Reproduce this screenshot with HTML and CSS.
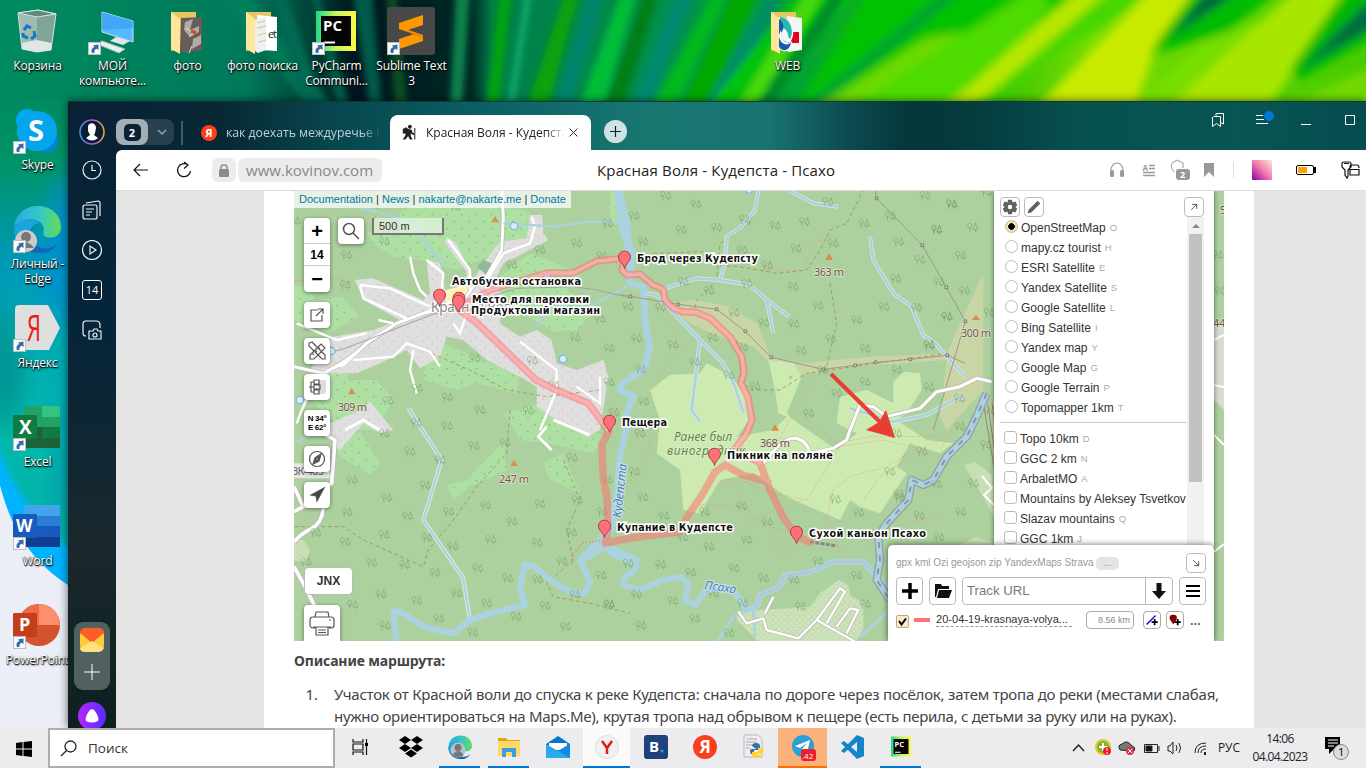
FILE: index.html
```html
<!DOCTYPE html>
<html lang="ru">
<head>
<meta charset="utf-8">
<title>Красная Воля - Кудепста - Псахо</title>
<link rel="stylesheet" href="styles.css">
</head>
<body>
<svg class="sprite" aria-hidden="true">
  <symbol id="shortcut" viewBox="0 0 13 13"><rect width="13" height="13" fill="#b9bcc0"/><rect x="1" y="1" width="11" height="11" fill="#fafafa"/><path d="M4 11C2.500 8 4.500 5.500 6.500 5L5 3.500L10.500 2.500V8L8.800 6.800C7 7.300 6 9 6.500 11Z" fill="#3668ad"/></symbol>
  <symbol id="folder" viewBox="0 0 48 48"><path d="M8 4H33V38L8 43Z" fill="#e9c463"/><path d="M8 4L17 11V46L8 41Z" fill="#ffe69b"/></symbol>
  <symbol id="edge" viewBox="0 0 48 48"><path d="M1 22C3 8 13 1 25 1C38 1 48 10 48 22C48 31 40 34 33 32C28 30 32 27 30 21C26 12 9 12 1 22Z" fill="url(#edgeTop)"/><path d="M1 24C5 15 19 11 27 18C15 20 15 38 28 43C34 45 41 42 45 38C40 46 32 50 22 48C9 46 0 36 1 24Z" fill="#1368ba"/><path d="M1 24C6 12 23 12 27 18C15 20 13 35 22 41C8 43 0 34 1 24Z" fill="#18a5dc"/></symbol>
  <symbol id="pycharm" viewBox="0 0 48 48"><rect x="4" y="3" width="40" height="40" fill="url(#pyc)"/><rect x="9" y="8" width="30" height="30" fill="#050505"/><path d="M12 34.500h11" stroke="#fff" stroke-width="2"/><text x="11" y="23" font-size="15" class="logo-text">PC</text></symbol>
  <symbol id="pin" viewBox="0 0 14 19"><path d="M7 18C6 13 1 11 1 6.600A6 6 0 0 1 13 6.600C13 11 8 13 7 18Z" fill="#ff7077" stroke="#a63d43" stroke-width="1"/></symbol>
  <symbol id="hiker" viewBox="0 0 18 18"><circle cx="10" cy="2.500" r="2.200"/><path d="M2 5L6 3L8 5L12 6L13 9L15 10L14 12L11 10V13L13 17H10L8 13L5 17H2L5 12L5 10H2Z"/><path d="M15.500 4V17" stroke="#222" stroke-width="1.200"/></symbol>
  <defs>
    <linearGradient id="edgeTop"><stop offset="0" stop-color="#2ca8e8"/><stop offset=".55" stop-color="#35c8c5"/><stop offset="1" stop-color="#68dc55"/></linearGradient>
    <linearGradient id="pyc" x2="1"><stop offset="0" stop-color="#21d789"/><stop offset=".5" stop-color="#c8f45c"/><stop offset="1" stop-color="#fcf84a"/></linearGradient>
    <linearGradient id="alice" x1="0" x2="1"><stop offset="0" stop-color="#b126ff"/><stop offset="1" stop-color="#5a2cff"/></linearGradient>
  </defs>
</svg>

<div class="desktop">
<svg class="wallpaper" viewBox="0 0 1366 768">
  <defs>
    <linearGradient id="wallTop"><stop offset="0" stop-color="#008b60"/><stop offset=".18" stop-color="#00795a"/><stop offset=".22" stop-color="#004b3d"/><stop offset=".26" stop-color="#00151f"/><stop offset=".345" stop-color="#002925"/><stop offset=".36" stop-color="#007c4a"/><stop offset=".5" stop-color="#00934c"/><stop offset=".58" stop-color="#00a235"/><stop offset=".7" stop-color="#20bd05"/><stop offset=".8" stop-color="#77dc00"/><stop offset="1" stop-color="#46cb00"/></linearGradient>
    <linearGradient id="wallLeft" x2="0" y2="1"><stop offset="0" stop-color="#008b60"/><stop offset=".1" stop-color="#00946a"/><stop offset=".24" stop-color="#0098b8"/><stop offset=".35" stop-color="#00a9b4"/><stop offset=".5" stop-color="#00b9aa"/><stop offset=".8" stop-color="#05a9a7"/></linearGradient>
    <filter id="soft" x="-20%" y="-20%" width="140%" height="140%"><feGaussianBlur stdDeviation="3"/></filter>
    <filter id="wide" x="-20%" y="-20%" width="140%" height="140%"><feGaussianBlur stdDeviation="5"/></filter>
    <filter id="softer" x="-50%" y="-20%" width="200%" height="140%"><feGaussianBlur stdDeviation="12"/></filter>
  </defs>
  <rect width="1366" height="768" fill="url(#wallTop)"/>
  <rect y="100" width="90" height="668" fill="url(#wallLeft)"/>
  <path d="M-10 290C20 330 30 380 10 420L-10 430Z" fill="#00918f" filter="url(#softer)"/>
  <path d="M80 160C30 220 30 300 80 330Z" fill="#0090d0" filter="url(#softer)"/>
  <path d="M80 350C45 420 50 500 80 560Z" fill="#0088bb" opacity=".5" filter="url(#softer)"/>
  <path d="M-10 425C0 450 15 515 90 562V800H-10Z" fill="#00b3ff" filter="url(#soft)"/>
  <path d="M-5 465C5 510 20 560 80 592V800H-5Z" fill="#eceff8"/>
  <g filter="url(#soft)">
    <path d="M215-10H245L335 110H310Z" fill="#00825b" opacity=".7"/>
    <path d="M270-10H284L325 110H305Z" fill="#006b52"/><path d="M310-10H318L350 110H338Z" fill="#005e49"/>
    <path d="M352-10H372L382 110H370Z" fill="#005c4a"/><path d="M386-10H396L408 110H395Z" fill="#0d4d26"/>
    <path d="M456-10H470L462 110H450Z" fill="#07824c"/>
    <path d="M500-10H512L498 110H486Z" fill="#00a411"/><path d="M525-10H533L514 110H506Z" fill="#09a56b"/>
    <path d="M566-10H580L547 110H526Z" fill="#08a307"/><path d="M590-10H605L570 110H554Z" fill="#00846d"/>
    <path d="M622-10H638L602 110H578Z" fill="#00bd38"/><path d="M645-10H660L622 110H604Z" fill="#007f16"/>
    <path d="M676-10H696L648 110H630Z" fill="#008a6e"/><path d="M715-10H730L675 110H650Z" fill="#00b91e"/>
    <path d="M735-10H760L705 110H680Z" fill="#00a800"/><path d="M771-10H785L724 110H702Z" fill="#008d67"/>
    <path d="M800-10H860L740 110H705Z" fill="#00c311"/><path d="M808-10H826L753 110H735Z" fill="#47d80d"/>
    <path d="M835-10H850L768 110H754Z" fill="#008b25"/>
  </g>
  <g filter="url(#wide)">
    <path d="M870-10H1060L850 125H786Z" fill="#00c200"/>
    <path d="M960-20H978L800 120H786Z" fill="#009e31"/><path d="M925 38L980 30L860 125H790Z" fill="#6bda00"/>
    <path d="M1030-10H1110L955 125H825Z" fill="#4ddb00"/><path d="M1040-10H1085L1030 25L1050 5Z" fill="#00c800"/>
    <path d="M1090-20H1130L970 120H930Z" fill="#b8e600"/><path d="M1110-10H1164L1045 60L980 110H970Z" fill="#47d700"/>
    <path d="M1150-10H1195L1155 50L1130 120H1025Z" fill="#c9ea00"/><path d="M1195-10H1280L1230 30L1150 55L1160 38Z" fill="#00bb00"/>
    <path d="M1205-5L1240-10L1170 38Z" fill="#005b3e"/><path d="M1200 45L1260 20L1220 65L1160 110H1130Z" fill="#77de00"/><path d="M1300-15H1350L1280 90L1260 125H1150Z" fill="#a8e600"/>
    <path d="M1345-10H1386V30L1300 80L1290 70Z" fill="#00b900"/><path d="M1366 3H1386V20L1300 70Z" fill="#006a40"/>
    <path d="M1386 60L1270 115H1386Z" fill="#72d900"/>
  </g>
</svg>

<div class="icon" style="left:0;top:8px"><svg viewBox="0 0 48 48"><path d="M5 5L25 2L43 6L38 42L24 44L9 41Z" fill="#7fa598" stroke="#d6e2df"/><path d="M5 5L24 9L43 6L25 2Z" fill="#5f8d7c" stroke="#dbe6e4"/><path d="M24 9L24 44L9 41L5 6Z" fill="#c8d9d5" opacity=".45"/><path d="M9 35L24 32L39 35L38 42L24 44L9 41Z" fill="#e3e5e3"/><path d="M11 22L14 18L18 20M21 23L22 28L18 31M15 30L10 28L10 25" fill="none" stroke="#1377cb" stroke-width="3"/></svg><span>Корзина</span></div>
<div class="icon" style="left:75px;top:8px"><svg viewBox="0 0 48 48"><path d="M14 4L45 13V34L14 24Z" fill="#56b8ff" stroke="#c5e3f0"/><path d="M14 4L45 13V20L14 22Z" fill="#3ba0f5" opacity=".7"/><path d="M28 29L35 31L42 33L35 37L22 33Z" fill="#e2e7e7"/><path d="M14 33L37 41L31 45L9 36Z" fill="#e9eeee" stroke="#a8b8b8"/><use href="#shortcut" y="34" width="13" height="13"/></svg><span>МОЙ<br>компьюте...</span></div>
<div class="icon" style="left:150px;top:8px"><svg viewBox="0 0 48 48"><use href="#folder"/><path d="M18 10L39 9V42L22 45L17 43Z" fill="#665e57"/><path d="M22 14L30 11L27 22L36 18V24L27 29L21 22ZM30 31L38 27V36L29 41Z" fill="#b2aaa4"/><path d="M23 20L31 25L26 29M29 38L26 45" stroke="#ddd" fill="none"/><path d="M28 23L33 25" stroke="#c94d24" stroke-width="3"/></svg><span>фото</span></div>
<div class="icon" style="left:225px;top:8px"><svg viewBox="0 0 48 48"><use href="#folder"/><path d="M19 7L39 9V43L23 42Z" fill="#fff"/><path d="M17 12L28 9V42L20 45L17 43Z" fill="#edf0ef"/><path d="M19 15L27 13M19 20L28 18M20 27L28 25M20 34L28 32" stroke="#b5d48c"/><text x="30" y="30" font-size="11" textLength="9" fill="#151e29" class="logo-plain">et</text></svg><span>фото поиска</span></div>
<div class="icon" style="left:299px;top:8px"><svg viewBox="0 0 48 48"><use href="#pycharm"/><use href="#shortcut" y="34" width="13" height="13"/></svg><span>PyCharm<br>Communi...</span></div>
<div class="icon" style="left:374px;top:8px"><svg viewBox="0 0 48 48"><rect y="-1" width="48" height="48" rx="3" fill="#484848"/><path d="M12 15L36 7V17L21 22L36 27V33L12 41V31L27 26L12 21Z" fill="#ff9800"/><path d="M21 22L36 27V31L23 25Z" fill="#e88a05"/><use href="#shortcut" y="34" width="13" height="13"/></svg><span>Sublime Text<br>3</span></div>
<div class="icon" style="left:750px;top:8px"><svg viewBox="0 0 48 48"><use href="#folder"/><path d="M24 8L39 10V42L25 44Z" fill="#f2f5f3"/><path d="M28 24H36V35H28Z" fill="#e5001b"/><path d="M16 9C28 8 34 24 28 33C33 38 27 45 20 43L16 41Z" fill="#f6f8f8"/><path d="M17 9C27 9 32 24 27 31C24 29 27 21 17 19Z" fill="#25b9b5"/><path d="M16 11C21 14 22 21 18 25C19 34 24 35 28 34C27 42 21 45 16 39Z" fill="#145fac"/><path d="M18 22C18 32 22 36 28 34C25 39 16 36 16 27Z" fill="#fff"/></svg><span>WEB</span></div>

<div class="icon" style="left:0;top:107px"><svg viewBox="0 0 48 48"><circle cx="14" cy="13" r="11" fill="#00a9ed"/><circle cx="34" cy="34" r="11" fill="#0085dc"/><circle cx="24" cy="24" r="20" fill="#05a5ed"/><text x="15" y="34" font-size="29" class="logo-text">S</text><use href="#shortcut" y="34" width="13" height="13"/></svg><span>Skype</span></div>
<div class="icon" style="left:0;top:205px"><svg viewBox="0 0 48 48"><use href="#edge"/><circle cx="13" cy="36" r="11" fill="#cbcccc"/><circle cx="13" cy="32" r="5" fill="#777"/><path d="M5 43Q13 32 21 43" fill="#777"/><use href="#shortcut" y="35" width="13" height="13"/></svg><span class="second">Личный -<br>Edge</span></div>
<div class="icon" style="left:0;top:305px"><svg viewBox="0 0 48 48"><path d="M6 0H35L47 23L36 45H6Q2 45 2 41V4Q2 0 6 0Z" fill="#dfdfdf"/><text x="14" y="36" font-size="37" textLength="14" lengthAdjust="spacingAndGlyphs" class="logo-plain" fill="#ed1b10">Я</text><use href="#shortcut" y="34" width="13" height="13"/></svg><span>Яндекс</span></div>
<div class="icon" style="left:0;top:404px"><svg viewBox="0 0 48 48"><path d="M11 2H47V44H11Z" fill="#1d633a"/><path d="M11 2H29V23H11Z" fill="#21a366"/><path d="M29 2H47V13H29Z" fill="#33c481"/><path d="M29 13H47V23H29Z" fill="#21a366"/><path d="M29 23H47V34H29Z" fill="#107c41"/><rect y="11" width="24" height="24" rx="1" fill="#107c41"/><text x="6" y="30" font-size="19" class="logo-text">X</text><use href="#shortcut" y="34" width="13" height="13"/></svg><span>Excel</span></div>
<div class="icon" style="left:0;top:503px"><svg viewBox="0 0 48 48"><path d="M11 2H47V44H11Z" fill="#103f91"/><path d="M11 2H47V13H11Z" fill="#41a5ee"/><path d="M11 13H47V23H11Z" fill="#2b7cd3"/><path d="M11 23H47V34H11Z" fill="#185abd"/><rect y="11" width="24" height="24" rx="1" fill="#185abd"/><text x="3" y="29" font-size="17" class="logo-text">W</text><use href="#shortcut" y="34" width="13" height="13"/></svg><span>Word</span></div>
<div class="icon" style="left:0;top:602px"><svg viewBox="0 0 48 48"><circle cx="26" cy="23" r="21" fill="#d35230"/><path d="M26 2A21 21 0 0 0 5 23H26Z" fill="#ed6c47"/><path d="M26 2A21 21 0 0 1 47 23H26Z" fill="#ff8f6b"/><rect y="11" width="24" height="24" rx="1" fill="#c43e1c"/><text x="6" y="29" font-size="18" class="logo-text">P</text><use href="#shortcut" y="34" width="13" height="13"/></svg><span>PowerPoint</span></div>
</div>

<main class="window">
  <aside class="side">
    <svg class="avatar" viewBox="0 0 26 26"><defs><linearGradient id="ring"><stop offset="0" stop-color="#3b9be8"/><stop offset=".5" stop-color="#c14bd9"/><stop offset="1" stop-color="#f7a24a"/></linearGradient></defs><circle cx="13" cy="13" r="12" fill="#082437" stroke="url(#ring)" stroke-width="1.500"/><circle cx="13" cy="13" r="10.500" fill="#0a1e30"/><path d="M9 8C9 3 17 3 17 9L16 14L15 16L19 19Q13 24 7 19L11 16L9 12Z" fill="#fff"/></svg>
    <svg class="s-icon" viewBox="0 0 20 20"><circle cx="10" cy="10" r="9"/><path d="M10 5V10.500H14"/></svg>
    <svg class="s-icon" viewBox="0 0 20 20"><path d="M4 3L16 1Q18 1 18 3V16M3 5H13Q15 5 15 7V17Q15 19 13 19H3Q1 19 1 17V7Q1 5 3 5M4 9H12M4 12H10M4 15H8"/></svg>
    <svg class="s-icon" viewBox="0 0 20 20"><circle cx="10" cy="10" r="9.500"/><path d="M8 6V14L14 10Z"/></svg>
    <div class="fourteen">14</div>
    <svg class="s-icon" viewBox="0 0 20 20"><path d="M4 16Q1 16 1 13V4Q1 1 4 1H14Q18 1 18 5V8M9 11H11L12 9H15L16 11H19V19H7V11Z"/><circle cx="13" cy="15" r="2"/></svg>
    <div class="dock"><svg width="24" height="24" viewBox="0 0 24 24"><rect width="24" height="24" rx="7" fill="#fecb3b"/><path d="M0 5Q0 0 6 0H18Q24 0 24 5L12 15Z" fill="#ff5d27"/><path d="M0 20L12 13L24 20Q22 24 18 24H5Q0 24 0 20Z" fill="#ffe27d"/></svg><svg width="16" height="16" viewBox="0 0 16 16"><path d="M8 0V16M0 8H16" stroke="#fff"/></svg></div>
    <svg class="alice" viewBox="0 0 28 28"><circle cx="14" cy="14" r="14" fill="url(#alice)"/><path d="M14 7C17 7 22 17 20 19Q14 22 8 19C6 17 11 7 14 7Z" fill="#fff"/></svg>
  </aside>
  <section class="browser">
    <header class="tabs">
      <div class="group"><b><i>2</i></b><svg width="10" height="6" viewBox="0 0 10 6"><path d="M1 1L5 5L9 1" fill="none" stroke="#9ba8b0" stroke-width="1.300"/></svg></div>
      <div class="tabsep"></div>
      <div class="tab"><em>Я</em><span>как доехать междуречье П</span></div>
      <div class="tab active"><svg width="16" height="17" viewBox="0 0 18 18" fill="#222"><use href="#hiker"/></svg><span>Красная Воля - Кудепста</span><svg width="9" height="9" viewBox="0 0 9 9"><path d="M.5 .5L8.500 8.500M8.500 .5L.5 8.500" stroke="#222b38"/></svg></div>
      <div class="newtab"><svg width="11" height="11" viewBox="0 0 11 11"><path d="M5.500 0V11M0 5.500H11" stroke="#123" stroke-width="1.200"/></svg></div>
      <svg class="wincontrols" width="160" height="20" viewBox="1206 110 160 20" fill="none" stroke="#fff"><path d="M1212.500 117V126.500L1216.500 123.500L1220.500 126.500V116.500H1213.500M1216 116V113.500H1223.500V124L1221 122.500M1256 115.500H1263M1256 119.500H1264M1256 123.500H1268M1301 124.500H1311"/><circle cx="1269" cy="116" r="4.500" fill="#0078d7" stroke="#0078d7"/><path d="M1345.500 115.500H1354.500V124.500H1345.500Z"/></svg>
    </header>
    <nav class="toolbar">
      <svg class="back" width="15" height="14" viewBox="0 0 15 14"><path d="M7 1L1 7L7 13M1 7H15" fill="none" stroke="#111" stroke-width="1.200"/></svg>
      <svg class="reload" width="16" height="18" viewBox="0 0 16 18"><path d="M12 4A6.500 6.500 0 1 0 14.500 10M8 1L12 4L8 7.500" fill="none" stroke="#111" stroke-width="1.300"/></svg>
      <div class="lock"><svg width="10" height="13" viewBox="0 0 10 13"><rect y="5" width="10" height="8" rx="1.500" fill="#8a8a8a"/><path d="M2 6V3Q2 1 5 1T8 3V6" fill="none" stroke="#8a8a8a" stroke-width="1.500"/></svg></div>
      <div class="url">www.kovinov.com</div><div class="pagetitle">Красная Воля - Кудепста - Псахо</div>
      <svg class="tools" width="256" height="24" viewBox="1110 158 256 24" fill="none"><path d="M1111 173V170A6 7 0 0 1 1123 170V173" stroke="#999" stroke-width="1.200"/><rect x="1110" y="170" width="4" height="7" rx="1.500" fill="#999"/><rect x="1120" y="170" width="4" height="7" rx="1.500" fill="#999"/><path d="M1149 165.500H1155M1149 168.500H1155M1143 172.500H1155M1143 175.500H1155" stroke="#999" stroke-width="1.300"/><text x="1142.500" y="170.500" font-size="8" fill="#999" font-weight="bold" class="logo-plain">A</text><path d="M1174 172C1171 168 1171 165 1172 163L1177 160L1183 163V168" stroke="#999"/><rect x="1176" y="169" width="14" height="11" rx="3" fill="#999"/><text x="1180" y="178" font-size="9" class="logo-text">2</text><path d="M1204 163H1214V177L1209 172L1204 177Z" fill="#999"/><path d="M1233.500 162V178" stroke="#ddd"/><defs><linearGradient id="pinkbox" x1="0" y1="1" x2="1" y2="0"><stop offset="0" stop-color="#8900a9"/><stop offset=".5" stop-color="#f278ac"/><stop offset="1" stop-color="#ffe7dc"/></linearGradient></defs><rect x="1252" y="160" width="20" height="20" rx="1" fill="url(#pinkbox)"/><rect x="1296.500" y="165.500" width="17" height="9" rx="1.500" stroke="#000"/><rect x="1298" y="167" width="9" height="6" fill="#ffa000"/><path d="M1315 167V173" stroke="#000" stroke-width="2"/><path d="M1345 170L1342 167V163Q1342 162 1344 162H1349Q1351 162 1351 164V167L1348 170V176L1347 178L1345 175ZM1344 163.500H1349M1350 168V166Q1350 165 1352 165H1357Q1359 165 1359 168M1350 169.500H1359V175H1350Z" stroke="#111" stroke-width="1.200"/></svg>
    </nav>
    <div class="viewport"><article class="page">
      <div class="mapbox">
<svg class="map" viewBox="294 191 930 450" id="map">
  <defs>
    <g id="tree" fill="none" stroke="#6f9969" stroke-width="2.300" opacity=".62"><path d="M-8-12C-16-12-16 3-8 3S0-12-8-12M-8-2V13M8-12L1 7H15ZM8 7V13"/></g>
    <pattern id="dots" width="44" height="42" patternUnits="userSpaceOnUse"><path d="M8 10h3v3h-3zM30 31h3v3h-3z" fill="#5b9359"/></pattern>
    <pattern id="orchard" width="18" height="18" patternUnits="userSpaceOnUse"><path d="M4 4h3v3h-3zM13 13h3v3h-3z" fill="#edf7e5"/></pattern>
    <pattern id="houses" width="29" height="31" patternUnits="userSpaceOnUse"><path d="M4 5h3v4h-3zM19 18h4v3h-4z" fill="#cdb0a6"/></pattern>
    <g id="scrub"><path d="M230 125L330 140L330 65L450 20L560 55L620 40L720 65L730 145L570 210L500 240L390 210L310 200L250 160Z"/><path d="M12 290L50 280L80 330L160 320L205 380L120 430L12 390Z"/><path d="M630 260L720 190L850 240L870 260L830 300L920 360L860 420L790 425L700 370L630 330Z"/><path d="M450 455L600 520L690 545L680 610L560 580L500 600L400 570L410 500Z"/><path d="M60 550L170 520L175 570L260 570L310 630L260 720H160L70 640Z"/><path d="M960 0L1000 0L1020 130L960 90Z"/><path d="M640 670L750 640L880 710L940 740L910 790L800 765L690 750Z"/><path d="M130 780L210 725L270 820L240 855L150 800Z"/><path d="M470 885L530 870L640 755L650 840L540 890L490 930Z"/><path d="M760 820L820 790L870 910L780 870Z"/></g>
    <path id="village" d="M195 270L250 265L400 330L420 310L410 210L450 220L465 300L525 310L530 245L465 160L470 140L500 160L550 270L580 220L630 155L710 145L720 75L757 75L760 130L775 150L700 190L640 220L610 280L640 320L630 400L690 440L740 420L785 450L800 520L860 540L940 510L955 560L930 720L890 740L800 690L740 650L740 590L690 560L590 510L520 450L470 440L450 500L390 535L350 480L270 520L200 550L130 550L60 540L130 440L250 420L330 390L220 330ZM110 740L120 700L210 660L240 635L310 720L270 730L220 700L150 780Z"/>
    <path id="mainroads" d="M12 530L100 550Q180 510 230 460L320 400L400 370L510 345L550 290L590 260L635 180L640 80L635 0"/>
    <path id="streams" d="M415 0L405 60L365 110L320 140L315 220L300 270L390 285L440 330L508 380M440 330L460 430M80 310L110 315L240 450L215 660L240 695M240 450L310 520L345 590L370 668M505 0L580 40L655 50M750 140L760 210L820 310L875 350L910 435L945 460L1035 560M690 655L820 695L920 675L1030 615M135 295L230 265L300 270"/>
    <path id="lane" d="M690 720L720 645L760 650L800 680L900 655L950 605L1020 590L1070 565L1115 575M690 720L680 750L640 775L570 790Q560 750 525 745T430 820"/>
    <path id="rock" d="M1160-80L1130-10L1100 50L1040 110L1000 180L970 195L935 180L925 240L860 310L835 350L840 420L830 480L870 540"/>
    <path id="settle" d="M415 575L440 610L490 595L500 630L595 655L650 600L765 665M495 580L520 530M650 600L720 505L735 515L680 610M710 620L750 565L775 570L740 640"/>
    <path id="route" d="M624 260L622 270L627 275L640 274L653 285L663 289L665 300L673 308L683 312L695 312L710 318L730 337L742 357L744 372L741 383L748 397L752 420L746 434L735 449L760 463L770 490L783 517L797 537L810 542M768 482L743 475L725 465L715 472L702 495L687 517L680 532L637 537L605 543L608 530L607 497L603 476L602 444L609 431L588 403L556 390L536 380L477 323L458 309L490 290L523 280L547 273L573 273L597 261L617 259"/>
    <path id="roadpart" d="M624 260L622 270L627 275L640 274L653 285L663 289L665 300L673 308L683 312L695 312L710 318L730 337L742 357L744 372L741 383L748 397L752 420L746 434L735 449L760 463M609 431L588 403L556 390L536 380L477 323L458 309L490 290L523 280L547 273L573 273L597 261L617 259"/>
  </defs>
  <rect x="294" y="191" width="930" height="450" fill="#add19e"/>
  <g transform="translate(290 190) scale(.333333)">
    <use href="#scrub" fill="#aedfa3"/><use href="#scrub" fill="url(#dots)"/>
    <use href="#village" fill="#e0dfdf"/><use href="#village" fill="url(#houses)"/>
    <path d="M465 300L530 285L535 320L470 340Z" fill="#fff3bd"/><path d="M560 230L580 210L605 220L590 255Z" fill="#91b99b"/>
    <g fill="none" stroke="#a08036" stroke-width="2" stroke-dasharray="12 8"><path d="M425 490L560 550L650 600L770 620L930 600M230 20L270 60L250 90M660 660L650 790L560 890L490 990L415 1080L400 1130L220 1050L160 1010L12 1010M820 810L870 930L830 1020L850 1110L770 1180L790 1220L900 1240L1020 1270"/></g>
    <path d="M12 275L110 260L190 280" fill="none" stroke="#e89176" stroke-width="3" stroke-dasharray="4 5"/>
    <use href="#mainroads" fill="none" stroke="#b8b8b8" stroke-width="13"/>
    <g fill="none" stroke="#fff" stroke-width="7"><use href="#mainroads" stroke-width="9"/><path d="M20 700Q80 530 160 525L240 450L320 400L450 350L520 320M210 285L300 295L420 350M210 285L220 325L350 385M265 390L310 400M20 400L140 450L230 430M190 510L310 500L350 460L420 485L450 530M360 200L370 250L390 300L410 320M410 210L460 250L455 300M475 150L540 240L540 300M590 270L640 190L720 160L735 110L725 80M490 400L510 430L530 370M690 455L800 540L800 600L750 720M930 560L930 640L860 590M370 480L360 540L380 610"/></g>
    <g fill="none" stroke="#e5efe3" stroke-width="12"><path id="hillstream" d="M355 655L410 740L455 810L400 990L520 1165L540 1290"/></g>
    <g fill="none" stroke="#aad3df" stroke-width="7"><path d="M120 30L300 75L380 110L430 190L470 220M640 100L800 110L890 95L990 98M1010 290L900 350L780 350L740 410M355 655L410 740L455 810L400 990L520 1165L540 1290M12 760L120 705"/><path d="M985 0L1010 100L1020 260" stroke-width="22"/></g>
    <path d="M130 485L165 475L270 435L350 403L430 373L680 295L760 293L850 290L920 300L1030 325" fill="none" stroke="#a4a29a" stroke-width="3"/>
    <g fill="#d69151"><path d="M604 97L615 78L627 97ZM174 613L185 594L197 613ZM661 828L672 810L684 828Z"/></g>
    <g fill="#dceef5" stroke="#78bce6" stroke-width="4"><circle cx="672" cy="108" r="11"/><circle cx="124" cy="483" r="11"/><circle cx="30" cy="630" r="11"/><circle cx="819" cy="507" r="11"/><circle cx="770" cy="259" r="11"/></g>
    <path d="M0 820H125V865H0Z" fill="#e7e7e4"/>
  </g>
  <g transform="translate(290 420) scale(.333333)">
    <path d="M12 360L40 360L60 390L45 430L12 420Z" fill="#c8dfb5"/>
    <g fill="none" stroke="#b8b8b8" stroke-width="16"><path id="westroad" d="M100 40L135 60L125 190L70 220M100 265Q95 310 65 325T12 365M12 440L45 500L75 560M12 200L40 260L12 275"/></g>
    <path d="M100 40L135 60L125 190L70 220M100 265Q95 310 65 325T12 365M12 440L45 500L75 560M12 200L40 260L12 275" fill="none" stroke="#fff" stroke-width="11"/>
    <path d="M770 20L745 50L785 90M790 0L900 45M165 30L220 0L270 30" fill="none" stroke="#fff" stroke-width="8"/>
    <g fill="none" stroke="#aad3df" stroke-linejoin="round"><path d="M1010 20L990 110L980 230L965 330L940 350L890 400L870 420L900 485L885 520L840 515L780 480L735 440L705 435L690 500L705 555L600 580L540 600L490 640L400 620L330 575L310 575L320 670" stroke-width="19"/><path d="M880 420L940 380L980 410L1030 425" stroke-width="18"/></g>
    <path d="M845 430L850 400L880 370L935 360" stroke="#ea7e73" stroke-width="4" stroke-dasharray="4 6" fill="none"/>
  </g>
  <g transform="translate(620 190) scale(.333333)">
    <path d="M135 340L230 330L330 350L410 400L430 440L450 500L540 520L750 500L980 490L1090 250V600L980 720L960 680L980 510L700 530L500 560L450 520L400 470L300 440L210 400Z" fill="#c9d5a4"/>
    <path d="M90 600L150 555L240 550L260 520L300 540L350 580L380 610L390 690L350 740L460 720L500 680L475 670L465 600L445 510L520 520L545 560L500 670L520 690L650 780L710 730L650 700L660 620L740 600L820 640V575L850 545L900 550L905 600L860 670L830 690L920 750L1000 760L960 790L870 760L830 830L860 850L780 970L720 950L690 930L660 990L500 920L400 850L300 870L240 970L190 960L180 840L110 790L120 690Z" fill="#cdebb0"/>
    <g fill="none" stroke="#a08036" stroke-width="2" stroke-dasharray="12 8"><path d="M420 0L390 100L300 160L290 270L230 330L220 370M100 190L250 185L280 225L360 230L470 250L560 240L600 180L630 120L680 100L730 0M630 280L650 400L620 530M350 450L365 570L390 600H480L560 550L980 490"/></g>
    <g fill="none" stroke="#f0957f" stroke-width="3" stroke-dasharray="3 6"><path d="M330 130L390 190L430 240L550 240L580 160L630 140M140 370L180 470L130 550L90 610M580 560L530 650L450 800L350 900L390 990L550 930M530 660L650 760L750 740L980 740L900 780L840 820L780 860L730 930M960 780L1010 700"/></g>
    <path d="M-10 0L10 130L35 180L30 280L70 290L75 400L90 470L70 540L5 580L0 600L40 620L15 680L20 720" fill="none" stroke="#aad3df" stroke-width="20" stroke-linejoin="round"/>
    <g fill="none" stroke-linejoin="round"><use href="#streams" stroke="#dcebe0" stroke-width="12"/><use href="#streams" stroke="#aad3df" stroke-width="8"/></g>
    <path d="M0 315L31 319L175 343L290 358L376 424L454 502L610 538L706 526L767 517L871 508L982 496L1035 520M765 0L770 25L907 166L979 292L1036 394L940 720" fill="none" stroke="#999891" stroke-width="3"/>
    <g fill="#ddd" stroke="#77756e" stroke-width="3"><path d="M27 315h8v8h-8zM171 339h8v8h-8zM286 354h8v8h-8zM372 420h8v8h-8zM450 498h8v8h-8zM606 534h8v8h-8zM702 522h8v8h-8zM763 513h8v8h-8zM867 504h8v8h-8zM978 492h8v8h-8zM766 21h8v8h-8zM903 162h8v8h-8zM975 288h8v8h-8zM1032 390h8v8h-8z"/></g>
    <g fill="none" stroke-linejoin="round"><use href="#lane" stroke="#b9b9ae" stroke-width="13"/><use href="#lane" stroke="#fff" stroke-width="9"/></g>
    <g fill="#d69151"><path d="M615 210L627 189L639 210ZM453 722L465 703L477 722ZM1056 390L1068 374L1080 390Z"/></g><circle cx="387" cy="0" r="10" fill="#dceef5" stroke="#78bce6" stroke-width="4"/><circle cx="512" cy="562" r="5" fill="#8fc6d5"/>
  </g>
  <g transform="translate(600 420) scale(.333333)">
    <path d="M410 575L630 560L660 520L715 480L745 495L750 525L790 550L790 625L765 670H480L410 600Z" fill="#c8dfb5"/><path d="M410 575L630 560L660 520L715 480L745 495L750 525L790 550L790 625L765 670H480L410 600Z" fill="url(#orchard)"/>
    <g fill="none" stroke="#aad3df" stroke-linejoin="round"><path d="M0 380L50 390L110 420L105 450L75 470L70 495L120 510L190 480L240 470L265 490L255 540L285 555L320 510L370 500L410 525L440 570L470 560L480 525L540 500L555 465L620 460L700 425L790 425L840 480L880 520" stroke-width="18"/><path d="M460 570L465 650M440 575L400 590L350 670M870 570L780 650" stroke-width="9"/></g>
    <path d="M470 560L480 525L540 500L555 465L620 460L700 425L790 425L840 480" fill="none" stroke="#ef937b" stroke-width="3" stroke-dasharray="3 6"/>
    <path d="M1150-50L1170 0L1190 180L1230 400H1320L1250 100L1240-50Z" fill="#c7d2a3"/><path d="M1150-50L1180 130L1235 380M1163-50L1200 200L1245 380M1176-50L1210 200L1255 380" fill="none" stroke="#918b7c" stroke-width="3"/>
    <g fill="none" stroke-linejoin="round"><use href="#rock" stroke="#999fa5" stroke-width="25"/><use href="#rock" stroke="#aad3df" stroke-width="17"/><use href="#rock" stroke="#8797ad" stroke-width="6" stroke-dasharray="18 22"/></g>
    <g fill="none" stroke-linejoin="round"><use href="#settle" stroke="#b9b9ae" stroke-width="11"/><use href="#settle" stroke="#fff" stroke-width="7"/></g>
    <path d="M340 200L420 180L520 220L620 240L720 80L850 60L950 85L860 140L750 170L700 210L680 290L720 390L740 420M300 255L430 260L500 320L560 330L510 390L560 400L600 360M160 0L140 120L90 180L110 210M1020 290L920 310L850 330L800 390" fill="none" stroke="#ef937b" stroke-width="3" stroke-dasharray="3 6"/><path d="M630 365L710 378" stroke="#888" stroke-width="9" stroke-dasharray="12 4"/>
  </g>
  <path d="M964 465L975 462L992 475L994 510L1010 550L985 500L970 475Z" fill="#c8dfb5"/><path d="M960 545L975 537L994 542V550Z" fill="#c8dfb5"/><path d="M982 476L992 488L984 495L994 505" stroke="#fff" stroke-width="2" fill="none"/>
  <path d="M1214 325H1224V410L1214 400Z" fill="#d8ddd4"/><path d="M1214 340L1224 335M1214 385L1224 387M1214 435L1224 445M1214 552L1224 544" stroke="#fff" stroke-width="2"/>
  <g id="trees"></g>
  <g fill="none" stroke-linejoin="round" stroke-linecap="round">
    <use href="#route" stroke="#ff6f6f" stroke-opacity=".52" stroke-width="7.500"/>
    <use href="#roadpart" stroke="#ffb4b8" stroke-opacity=".75" stroke-width="3.500"/>
  </g>
  <path d="M831 374L885 427" stroke="#e93e32" stroke-width="4"/><path d="M895 438L866 430L879 422L886 410Z" fill="#e83e31"/>
  <g class="peaks"><text x="338" y="411" textLength="29">309 m</text><text x="499" y="483" textLength="30">247 m</text><text x="814" y="276" textLength="30">363 m</text><text x="760" y="447" textLength="30">368 m</text><text x="961" y="337" textLength="30">300 m</text><text x="1220" y="214">5</text><text x="1213" y="327">44</text></g>
  <text x="291" y="475" textLength="33" class="roadname">ВК-405</text><text x="431" y="312" textLength="88" class="town">Красная Воля</text>
  <g class="vine"><text x="674" y="441" textLength="58">Ранее был</text><text x="667" y="455" textLength="78">виноградник</text></g>
  <g class="water"><text transform="translate(621 518) rotate(-84)" textLength="54">Кудепста</text><text transform="translate(704 589) rotate(8)" textLength="32">Псахо</text></g>
  <g><use href="#pin" x="432.500" y="288.500" width="14" height="19"/><use href="#pin" x="452" y="291.500" width="14" height="19"/><use href="#pin" x="451.500" y="294.500" width="14" height="19"/><use href="#pin" x="617.500" y="250.500" width="14" height="19"/><use href="#pin" x="602.500" y="414.500" width="14" height="19"/><use href="#pin" x="707.500" y="447.500" width="14" height="19"/><use href="#pin" x="597.500" y="519.500" width="14" height="19"/><use href="#pin" x="789.500" y="525.500" width="14" height="19"/></g>
  <g class="labels"><text x="452" y="285" textLength="129">Автобусная остановка</text><text x="472" y="303" textLength="117">Место для парковки</text><text x="471" y="314" textLength="129">Продуктовый магазин</text><text x="637" y="262" textLength="121">Брод через Кудепсту</text><text x="622" y="426" textLength="45">Пещера</text><text x="727" y="459" textLength="106">Пикник на поляне</text><text x="617" y="531" textLength="116">Купание в Кудепсте</text><text x="809" y="537" textLength="117">Сухой каньон Псахо</text></g>
</svg>
        <div class="credits"><a>Documentation</a> | <a>News</a> | <a>nakarte@nakarte.me</a> | <a>Donate</a></div>
        <div class="mapcontrols">
          <div class="zoombox"><b>+</b><b class="level">14</b><b>−</b></div>
          <div class="ctl"><svg viewBox="0 0 20 20"><path d="M11 5H4V16H15V10M9 11L16 4M11 4H16V9"/></svg></div>
          <div class="ctl"><svg viewBox="0 0 20 20"><path d="M2 2L5 1L18 14V18H15L2 5ZM3 14L14 3L18 7L7 18H3ZM5 12L7 14M8 9L10 11M11 6L13 8"/></svg></div>
          <div class="ctl"><svg viewBox="0 0 20 20"><rect x="11" y="3" width="8" height="14" rx="2" fill="#ddd" stroke="none"/><path d="M7 3H12V7H7ZM7 8H13V12H7ZM7 13H12V17H7ZM7 5H4V15H7M2 10H7"/></svg></div>
          <div class="ctl coords">N 34°<br>E 62°</div>
          <div class="ctl"><svg viewBox="0 0 20 20"><circle cx="10" cy="10" r="7.500"/><path d="M14 5L12 12L6 15L8 9Z" fill="#555"/><circle cx="10" cy="10" r="1.200" fill="#fff"/></svg></div>
          <div class="ctl"><svg viewBox="0 0 20 20"><path d="M4 10L17 3L10 16L9 11Z" fill="#444"/></svg></div>
        </div>
        <div class="search"><svg width="20" height="20" viewBox="0 0 20 20"><circle cx="8" cy="8" r="5.500"/><path d="M12 12L18 18"/></svg></div>
        <div class="scale">500 m</div>
        <div class="jnx">JNX</div>
        <div class="printer"><svg width="28" height="28" viewBox="0 0 28 28"><path d="M7 8L8 3H20L21 8M7 19H4Q2 18 2 16V11Q2 8 5 8H23Q26 8 26 11V16Q26 19 23 19H21M5 18H23M8 18V26H20V18M10 21H18M10 23.500H18M21 11H23"/></svg></div>
        <div class="layers">
          <div class="layertop"><button><svg viewBox="0 0 20 20"><path d="M8 2H12L13 5L16 4L18 8L16 10L18 12L16 16L13 15L12 18H8L7 15L4 16L2 12L4 10L2 8L4 4L7 5Z" fill="#606060"/><circle cx="10" cy="10" r="2.500" fill="#fff"/></svg></button><button><svg viewBox="0 0 20 20"><path d="M3 17L4 13L14 3L17 6L7 16Z" fill="#606060"/></svg></button><button class="last"><svg viewBox="0 0 20 20"><path d="M7 13L13 7M8 7H13V12" fill="none" stroke="#444"/></svg></button></div>
          <div class="layerbody"><div class="layerlist">
            <p><i class="radio on"></i>OpenStreetMap <small>O</small></p><p><i class="radio"></i>mapy.cz tourist <small>H</small></p><p><i class="radio"></i>ESRI Satellite <small>E</small></p><p><i class="radio"></i>Yandex Satellite <small>S</small></p><p><i class="radio"></i>Google Satellite <small>L</small></p><p><i class="radio"></i>Bing Satellite <small>I</small></p><p><i class="radio"></i>Yandex map <small>Y</small></p><p><i class="radio"></i>Google Map <small>G</small></p><p><i class="radio"></i>Google Terrain <small>P</small></p><p><i class="radio"></i>Topomapper 1km <small>T</small></p>
            <hr><p><i class="check"></i>Topo 10km <small>D</small></p><p><i class="check"></i>GGC 2 km <small>N</small></p><p><i class="check"></i>ArbaletMO <small>A</small></p><p><i class="check"></i>Mountains by Aleksey Tsvetkov</p><p><i class="check"></i>Slazav mountains <small>Q</small></p><p><i class="check"></i>GGC 1km <small>J</small></p>
          </div><div class="scroll"><i></i><b></b></div></div>
        </div>
        <div class="tracks">
          <div class="formats"><span>gpx kml Ozi geojson zip YandexMaps Strava <em>...</em></span><button><svg viewBox="0 0 20 20"><path d="M7 7L13 13M13 8V13H8" fill="none" stroke="#444"/></svg></button></div>
          <div class="inputs"><div class="box"><svg width="16" height="16" viewBox="0 0 16 16"><path d="M8 0V16M0 8H16" stroke="#000" stroke-width="3.500"/></svg></div><div class="box"><svg width="18" height="16" viewBox="0 0 18 16"><path d="M1 1H7L8 3H15V6H4L2 14H1ZM5 7H18L15 15H3Z" fill="#111"/></svg></div><div class="trackurl"><span>Track URL</span><b><svg width="14" height="16" viewBox="0 0 14 16"><path d="M4.500 0H9.500V8H14L7 16L0 8H4.500Z" fill="#111"/></svg></b></div><div class="box"><svg width="14" height="12" viewBox="0 0 14 12"><path d="M0 1H14M0 6H14M0 11H14" stroke="#000" stroke-width="2"/></svg></div></div>
          <div class="track"><i class="ticked"><svg width="11" height="11" viewBox="0 0 11 11"><path d="M2 5L4.500 8.500L9 2.500" fill="none" stroke="#000" stroke-width="2"/></svg></i><i class="stripe"></i><span class="name">20-04-19-krasnaya-volya...</span><span class="length">8.56 km</span><div class="mini"><svg viewBox="0 0 18 18"><path d="M3 14L13 4" stroke="#00f" stroke-width="1.500"/><path d="M12 8V15M8.500 11.500H15.500" stroke="#000" stroke-width="2"/></svg></div><div class="mini"><svg viewBox="0 0 18 18"><path d="M7 14L3 8Q2 3 7 3T11 8Z" fill="#800"/><path d="M12 8V15M8.500 11.500H15.500" stroke="#000" stroke-width="2"/></svg></div><b class="more">...</b></div>
        </div>
      </div>
      <h2>Описание маршрута:</h2>
      <ol><li><span class="line1">Участок от Красной воли до спуска к реке Кудепста: сначала по дороге через посёлок, затем тропа до реки (местами слабая,</span><br><span class="line2">нужно ориентироваться на Maps.Me), крутая тропа над обрывом к пещере (есть перила, с детьми за руку или на руках).</span></li></ol>
    </article></div>
  </section>
</main>

<footer class="taskbar">
  <div class="start"><svg width="16" height="16" viewBox="0 0 16 16"><path d="M0 2L6.500 1V7.500H0ZM7.500 1L16 0V7.500H7.500ZM0 8.500H6.500V15L0 14ZM7.500 8.500H16V16L7.500 15Z"/></svg></div>
  <div class="find"><svg width="17" height="17" viewBox="0 0 17 17"><circle cx="10.500" cy="6.500" r="5.500" fill="none" stroke="#222" stroke-width="1.300"/><path d="M6.500 10.500L1 16" stroke="#222" stroke-width="1.300"/></svg><span>Поиск</span></div>
  <div class="apps">
    <div><svg viewBox="0 0 24 24"><path d="M5 4V7H15V4M5 20V17H15V20M5 9H15V15H5ZM18.500 4V20" fill="none" stroke="#111" stroke-width="1.200"/><path d="M17 8H20V11H17Z"/></svg></div>
    <div class="shifted"><svg viewBox="0 0 24 24"><path d="M6 1L12 5L6 9L0 5ZM18 1L24 5L18 9L12 5ZM6 9L12 13L6 17L0 13ZM18 9L24 13L18 17L12 13ZM6 18.500L12 14.500L18 18.500L12 22.500Z"/></svg></div>
    <div class="open"><svg viewBox="0 0 48 48"><use href="#edge"/><circle cx="20" cy="30" r="15" fill="#bcc0c1"/><circle cx="20" cy="25" r="7" fill="#747878"/><path d="M9 40Q20 24 31 40Q20 48 9 40Z" fill="#747878"/></svg></div>
    <div class="open"><svg viewBox="0 0 24 24"><path d="M1 3H9L11 5H23V21H1Z" fill="#e0a411"/><path d="M1 6H23V21H1Z" fill="#ffda6b"/><path d="M5 13H19V22H15V17H9V22H5Z" fill="#3f9ddc"/></svg></div>
    <div><svg viewBox="0 0 24 24"><path d="M0 9L12 1L24 9V23H0Z" fill="#0875ca"/><path d="M3 8H21V15H3Z" fill="#fff"/><path d="M0 9L12 16L24 9V23H0Z" fill="#2ba9ee"/><path d="M12 16L24 9V23Z" fill="#1489df"/></svg></div>
    <div class="open current"><svg viewBox="0 0 24 24"><circle cx="12" cy="12" r="11.500" fill="#f1f1f1" stroke="#ddd"/><path d="M7 6L12 13L17 6M12 13V19" fill="none" stroke="#db1b20" stroke-width="2.500"/></svg></div>
    <div><svg viewBox="0 0 24 24"><rect width="24" height="24" rx="3" fill="#1d427c"/><text x="5" y="17" font-size="15" class="logo-text">B</text><circle cx="18" cy="16" r="1.500" fill="#24a8ef"/></svg></div>
    <div><svg viewBox="0 0 24 24"><circle cx="12" cy="12" r="12" fill="#fb3e1c"/><text x="6.500" y="18" font-size="17" class="logo-text">Я</text></svg></div>
    <div><svg viewBox="0 0 24 24"><path d="M2 0H16L20 4V22H2Z" fill="#eee" stroke="#bbb"/><path d="M5 4H15M4 7H15M4 10H10M4 13H8" stroke="#aaa"/><path d="M10 11Q10 8 14 8T18 11V15H12V19H9Q7 16 9 14H14" fill="#3672a7"/><path d="M14 23Q10 23 10 20V17H16V13H20Q23 16 20 19H15V20H19V22Z" fill="#ffd43b"/></svg></div>
    <div class="telegram"><svg viewBox="0 0 24 24"><circle cx="12" cy="11" r="11" fill="#2ba0d9"/><path d="M4 11L19 5L16 18L11 14L16 8L9 13Z" fill="#fff"/><rect x="10" y="14" width="15" height="12" rx="3" fill="#e9202d"/><text x="11" y="23.500" font-size="8" fill="#fff" class="logo-plain">.42</text></svg></div>
    <div><svg viewBox="0 0 24 24"><path d="M17 0L24 3V21L17 24L1 8L4 6L17 17V7L4 18L1 16Z" fill="#1684c9"/></svg></div>
    <div class="open"><svg viewBox="0 0 48 48"><use href="#pycharm"/></svg></div>
  </div>
  <svg class="tray" width="170" height="24" viewBox="1070 736 170 24" fill="none" stroke="#222"><path d="M1073 751L1078.500 745L1084 751" stroke-width="1.500"/><circle cx="1103" cy="747" r="7" fill="#74b82f" stroke="#e4c72b" stroke-width="2"/><path d="M1103 743V751M1099 747H1107" stroke="#fff" stroke-width="2"/><circle cx="1107" cy="751" r="4" fill="#ec1c24" stroke="none"/><path d="M1107 748V751M1107 752V754" stroke="#fff"/><path d="M1120 750Q1117 745 1122 744Q1127 739 1132 746Q1136 747 1134 751Z" fill="#777"/><circle cx="1130" cy="751" r="4" fill="#dc3544" stroke="none"/><path d="M1128 749L1132 753M1132 749L1128 753" stroke="#fff"/><path d="M1144.500 744.500H1157.500V752.500H1144.500ZM1159 746V751"/><path d="M1146 746H1152V751H1146Z" fill="#111"/><path d="M1168 746H1170L1173 742V754L1170 751H1168ZM1176 745Q1178 748 1176 751M1179 743Q1182 748 1179 753"/><path d="M1195 753Q1195 743 1206 743M1198 753Q1198 746 1206 746M1201 753Q1201 749 1206 749"/><path d="M1205 752V755" stroke-width="2"/><text x="1218" y="752" font-size="12" textLength="22" fill="#222" stroke="none" class="logo-plain">РУС</text></svg>
  <div class="clock">14:06<br>04.04.2023</div>
  <svg class="notify" width="27" height="25" viewBox="1324 739 27 25"><path d="M1325 740H1340V752H1334L1329 757V752H1325Z"/><path d="M1328 743H1338M1328 746H1338M1328 749H1334" stroke="#fff"/><circle cx="1341" cy="755" r="7.500" fill="#ddd" stroke="#888"/><text x="1338" y="759" font-size="11" class="logo-plain">1</text></svg>
</footer>
<script src="script.js"></script>
</body>
</html>
```
FILE: styles.css
```css
*{box-sizing:border-box}
body{margin:0;width:1366px;height:768px;overflow:hidden;position:relative;font-family:"Open Sans","Noto Sans",sans-serif;background:#008b60}
.sprite{position:absolute;width:0;height:0}
.wallpaper{position:absolute;inset:0;width:1366px;height:768px}
.icon{position:absolute;width:75px;display:flex;flex-direction:column;align-items:center;color:#fff;font-size:12px;line-height:15px;text-align:center;letter-spacing:-.15px;white-space:nowrap;text-shadow:1px 1px 2px #000,0 1px 1px #000}
.icon>svg{width:48px;height:48px;overflow:visible;margin-bottom:2px;margin-left:-1px;flex:none;text-shadow:none;letter-spacing:0}
.icon .second{margin-top:1px}
.logo-text{font-family:"Open Sans",sans-serif;font-weight:700;fill:#fff}
.logo-plain{font-family:"Open Sans",sans-serif}
.window{position:absolute;left:68px;top:101px;width:1298px;height:627px;display:flex;overflow:hidden;background:linear-gradient(90deg,#082234 0,#082836 12%,#07454d 20%,#0a6265 33%,#187671 44%,#187470 54%,#0d4b52 60%,#033638 65%,#053e40 71%,#07514f 78%,#075653 90%,#064b50 100%);box-shadow:0 0 9px #0009;border-top:1px solid #0d3a3a}
.side{width:48px;flex:none;background:linear-gradient(#082234,#05253a 35%,#19282d 70%,#0d201e);display:flex;flex-direction:column;align-items:center;padding-top:17px}
.avatar{width:26px;height:26px;margin-bottom:15px;flex:none}
.s-icon{width:20px;height:20px;margin-bottom:20px;fill:none;stroke:#eef4f7;stroke-width:1.200;flex:none}
.fourteen{width:20px;height:20px;border:1px solid #fff;border-radius:3px;color:#fff;font-size:11px;line-height:18px;text-align:center;margin-bottom:20px;flex:none}
.dock{width:36px;height:68px;border-radius:9px;background:#506160;margin-top:262px;padding-top:6px;display:flex;flex-direction:column;align-items:center;gap:12px;flex:none}
.alice{width:28px;height:28px;margin-top:12px;flex:none}
.browser{width:1250px;display:flex;flex-direction:column}
.tabs{height:48px;display:flex;align-items:center;padding-top:13px;flex:none}
.group{width:58px;height:26px;border-radius:8px;background:#28404f;display:flex;align-items:center;gap:9px;margin-top:-1px}
.group b{width:32px;height:26px;border-radius:8px;background:#a3afb7;display:flex;align-items:center;justify-content:center}
.group i{width:17px;height:17px;background:#082234;border-radius:5px;color:white;font:bold 11px/17px "Open Sans";text-align:center}
.tabsep{width:2px;height:24px;background:#455c68;margin-left:7px}
.tab{width:208px;height:36px;display:flex;align-items:center;color:#bcd0d4;font-size:12.300px;letter-spacing:-.05px;padding-left:18px}
.tab em{width:16px;height:16px;border-radius:50%;background:#fc3f1d;color:white;font:bold 11px/16px "Open Sans";text-align:center;margin-right:9px;flex:none}
.tab span{width:155px;overflow:hidden;white-space:nowrap;-webkit-mask-image:linear-gradient(90deg,#000 88%,transparent)}
.active{width:201px;margin-left:-1px;background:white;border-radius:8px 8px 0 0;color:#222;font-size:12px;letter-spacing:0;padding-left:11px}
.active>svg:first-child{margin-right:9px}.active span{width:139px;margin-right:4px;-webkit-mask-image:linear-gradient(90deg,#000 86%,transparent)}
.newtab{width:23px;height:23px;border-radius:50%;background:#d0e3e3;display:flex;align-items:center;justify-content:center;margin-left:13px;margin-top:-2px}
.wincontrols{margin-left:auto;margin-top:-25px}
.toolbar{height:41px;background:#fff;display:flex;align-items:center;flex:none;border-bottom:1px solid #dcdcdc;border-radius:6px 0 0 0;padding-left:17px}
.reload{margin-left:28px}.lock{width:24px;height:24px;margin-left:20px;border-radius:6px;background:#ececec;display:flex;align-items:center;justify-content:center}
.url{width:144px;height:24px;margin-left:2px;border-radius:6px;background:#ececec;padding-left:8px;color:#888;font-size:15px;line-height:24px;letter-spacing:.02px}
.pagetitle{width:240px;margin-left:215px;color:#222;font-size:15px;letter-spacing:.15px;white-space:nowrap}
.tools{margin-left:auto}
.viewport{height:537px;background:#e5e5e5;overflow:hidden}
.page{width:990px;height:537px;margin-left:148px;background:white;padding-left:30px}
.mapbox{width:930px;height:450px;position:relative;overflow:hidden;font-family:"Liberation Sans",sans-serif}
.map{display:block;width:930px;height:450px}
.peaks{font:11px "Noto Sans";fill:#73533d;paint-order:stroke;stroke:#dce6d4;stroke-width:1.500}
.roadname{font:11px "Noto Sans";fill:#666}.town{font:13.500px "Noto Sans";fill:#888;paint-order:stroke;stroke:#fff;stroke-width:2}
.vine{font:italic 12px "Noto Sans";fill:#5b8545;paint-order:stroke;stroke:#e8f2d8;stroke-width:1}
.water{font:italic 12px "Noto Sans";fill:#4a7faf;paint-order:stroke;stroke:#cce4eb;stroke-width:2}
.labels{font:bold 9.800px "DejaVu Sans";fill:#111;paint-order:stroke;stroke:#fff;stroke-width:3}
.credits{position:absolute;left:0;top:0;width:277px;height:17px;padding-left:5px;background:#ffffffb8;color:#333;font-size:11px;line-height:17px;white-space:nowrap}.credits a{color:#0078a8}
.mapcontrols{position:absolute;left:10px;top:27px;display:flex;flex-direction:column;gap:10px}
.zoombox,.ctl,.search,.jnx,.printer{background:white;border-radius:4px;box-shadow:0 1px 4px #0007}
.zoombox{width:26px;height:74px;display:flex;flex-direction:column}
.zoombox b{height:26px;font-size:20px;line-height:26px;text-align:center;border-bottom:1px solid #ccc}.zoombox .level{height:22px;font-size:12px;line-height:22px}.zoombox b:last-child{border:0}
.ctl{width:26px;height:26px;display:flex;align-items:center;justify-content:center}.ctl svg{width:20px;height:20px}.ctl svg,.search svg,.printer svg{fill:none;stroke:#555;stroke-width:1.200}
.coords{font:bold 8px/9px "Liberation Sans";letter-spacing:-.3px;text-align:center}
.search{position:absolute;left:44px;top:27px;width:26px;height:26px;padding:3px}.search svg{stroke-width:1.500}
.scale{position:absolute;left:78px;top:27px;width:72px;height:17px;border:2px solid #777;border-top:0;background:#ffffff80;padding-left:5px;font-size:11px;line-height:16px;color:#333}
.jnx{position:absolute;left:11px;top:377px;width:47px;height:26px;text-align:center;font:bold 12px/26px "Liberation Sans";color:#333;box-shadow:0 0 0 1px #bbb}
.printer{position:absolute;left:10px;top:414px;width:36px;height:36px;padding:4px;border-radius:4px 4px 0 0}
.layers{position:absolute;left:700px;top:0;width:220px;height:356px;background:#fff;box-shadow:0 0 5px #0008;padding:6px 10px 0 6px;color:#333}
.layertop{display:flex;gap:4px;height:20px}.layertop .last{margin-left:auto}
button{width:20px;height:20px;padding:0;border:1px solid #bbb;border-radius:4px;background:#fff;display:flex;align-items:center;justify-content:center}button svg{width:18px;height:18px;flex:none}
.layerbody{height:330px;display:flex;overflow:hidden}.layerlist{width:187px;overflow:hidden;padding-left:5px}
.layerlist p{height:20px;margin:0;display:flex;align-items:center;font-size:12px;white-space:nowrap;padding-top:1px}
.layerlist small{font-size:9.500px;color:#aaa;margin-left:4px}.radio,.check{width:13px;height:13px;border:1px solid #bbb;border-radius:50%;margin-right:3px;margin-top:-3px;flex:none}.check{border-radius:3px;margin-left:-1px}.radio.on{background:radial-gradient(#000 0 3px,#f8dfaa 3.500px)}
.layerlist hr{height:1px;border:0;background:#ccc;margin:5px 0 5px -5px}
.scroll{width:17px;background:#f1f1f1;padding:7px 2px 0;display:flex;flex-direction:column;align-items:center}.scroll i{border:4px solid transparent;border-top:0;border-bottom:4px solid #888}.scroll b{height:248px;width:13px;background:#c1c1c1;margin-top:6px}
.tracks{position:absolute;left:594px;top:354px;width:326px;height:96px;padding:8px 8px 0;background:#fff;border-radius:5px 5px 0 0;box-shadow:0 0 6px #0009}
.formats{height:24px;display:flex;justify-content:space-between;font-size:10px;color:#999;white-space:nowrap}.formats span{line-height:19px}.formats em{display:inline-block;height:13px;line-height:12px;background:#e4e4e4;border-radius:5px;padding:0 7px;font-style:normal}
.inputs{display:flex;gap:6px}.box{width:27px;height:28px;border:1px solid #bbb;border-radius:4px;display:flex;align-items:center;justify-content:center}
.trackurl{width:211px;height:28px;border:1px solid #bbb;border-radius:4px;display:flex}.trackurl span{width:183px;padding-left:4px;color:#777;font-size:13.200px;line-height:26px}.trackurl b{border-left:1px solid #bbb;width:27px;display:flex;align-items:center;justify-content:center}
.track{display:flex;align-items:center;height:30px}.ticked{width:13px;height:13px;background:#ffecc7;border:1px solid #bba983;border-radius:2px;display:flex;margin-top:3px}.stripe{width:16px;height:4px;background:#ff7077;margin:0 6px 0 5px}.name{width:136px;font-size:11px;border-bottom:1px dashed #999;color:#333;letter-spacing:.05px;padding-bottom:1px}.length{width:48px;height:18px;border:1px solid #aaa;border-radius:4px;font-size:9px;color:#888;line-height:16px;text-align:right;padding-right:3px;margin:0 9px 0 14px}.mini{width:18px;height:18px;border:1px solid #aaa;border-radius:4px;margin-right:5px;display:flex}.mini svg{width:16px;height:16px}.more{color:#666;font-size:13px;margin-left:1px}
h2{margin:9px 0 0;font:bold 14px/22px "Noto Sans";letter-spacing:-.15px;color:#444}
ol{margin:11px 0 0;padding:0 0 0 28px;font:15px/22px "Noto Sans";color:#444}li{padding:0 0 0 12px}ol span{white-space:nowrap}
.line1{letter-spacing:-.23px}.line2{letter-spacing:-.3px}
.taskbar{position:absolute;left:0;top:728px;width:1366px;height:40px;display:flex;align-items:center;background:#ececee}
.start{width:48px;padding-left:16px;height:16px}.find{width:287px;height:40px;border:2px solid #adadad;background:white;display:flex;align-items:center;padding-left:10px;gap:11px;font-size:13.500px;color:#333}
.apps{display:flex;height:40px}.apps>div{width:49px;height:40px;display:flex;align-items:center;justify-content:center;border-bottom:2px solid transparent}.apps svg{width:24px;height:24px;overflow:visible}.apps .shifted{margin-left:2px}.apps .open{border-bottom:2px solid #0078d7;width:41px;margin:0 4px}.apps .current{background:#fafafa;width:47px;margin:0 1px}.apps .telegram{background:#fbb17c;border-color:#ff6c00}
.tray{margin-left:145px}.clock{width:68px;margin-left:6px;font-size:12px;line-height:18px;text-align:center;letter-spacing:-.6px;color:#222}.notify{margin-left:10px}
```
FILE: script.js
```js
// Woodland symbols: origin of each map tile group, followed by x,y pairs.
const groups = [
  [290,190,"15,93 170,195 165,285 283,155 245,17 418,15 496,50 664,25 860,160 750,180 953,100 936,197 665,225 850,360 930,387 855,443 957,475 957,577 792,586 727,512 472,622 382,595 294,633 570,660 715,662 555,505 972,667 379,698"],
  [290,420,"283,40 472,18 360,95 552,77 186,180 406,196 290,233 476,275 353,288 587,256 645,68 846,113 750,252 666,305 602,359 741,368 862,240 952,180 171,277 77,338 165,365 282,345 411,353 489,379 245,428 344,434 435,458 563,445 653,475 743,478 500,520 590,550 273,523 380,542 188,554 285,617 447,596 678,590 548,638 816,424 845,338 933,466 855,523 765,557 827,620 957,552 937,275 48,426 450,120"],
  [620,190,"137,17 228,43 42,77 183,119 69,155 290,113 465,107 554,95 374,88 366,180 528,175 639,160 732,100 811,78 624,35 915,17 994,42 950,119 836,155 900,209 827,266 957,276 519,290 594,347 267,302 190,275 381,280 342,368 24,350 122,353 50,445 278,443 159,464 224,516 432,398 522,402 442,226 543,482 710,390 792,350 890,353 981,380 927,466 735,476 632,446 368,472 327,556 405,588 62,538 71,634 607,541 831,540 735,576 650,610 566,670"],
  [600,420,"120,40 103,155 129,232 192,288 314,275 425,258 502,306 249,352 327,380 440,360 85,430 182,434 272,458 402,445 491,475 582,480 654,423 770,466 776,278 706,238 218,543 110,523 340,520 428,550 285,596 387,640 27,554 123,617 602,560 795,552 870,155 897,223 889,40"],
  [920,190,"96,43 158,112 50,118 122,196 134,302 81,380 28,463 208,368 27,592 118,625 211,662 199,5 893,195 900,302"],
  [880,420,"240,20 318,75 58,233 118,287 280,190 242,276 126,95 170,193 177,352"]
];
const layer = document.getElementById("trees");
for (const [ox, oy, list] of groups) {
  for (const pair of list.split(" ")) {
    const [x, y] = pair.split(",").map(Number);
    const use = document.createElementNS("http://www.w3.org/2000/svg", "use");
    use.setAttribute("href", "#tree");
    use.setAttribute("transform", `translate(${ox + x / 3} ${oy + y / 3}) scale(.35)`);
    layer.append(use);
  }
}
```
